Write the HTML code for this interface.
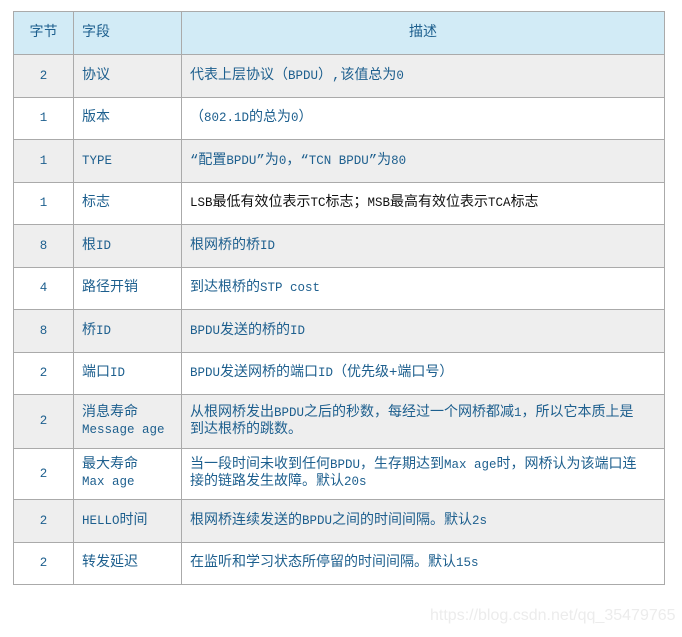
<!DOCTYPE html>
<html><head><meta charset="utf-8"><style>
body{margin:0;background:#fff;width:682px;height:637px;position:relative;overflow:hidden;font-family:"Liberation Mono","Noto Sans CJK SC",monospace;font-size:14px;color:#1d5f8e}
table{position:absolute;left:13px;top:11px;border-collapse:collapse;width:652px;table-layout:fixed}
td,th{border:1px solid #aaa;padding:0 14px 0 8px;font-weight:normal;line-height:17px}
th{background:#d2ebf6;height:42px;text-align:left}
tr.g td{background:#eee}
td.c,th.c{text-align:center;padding:0}
.m{font-size:12.5px}
.wm{position:absolute;left:430px;top:607px;font-family:"Liberation Sans",sans-serif;font-size:16px;color:#ececec}
</style></head><body>
<table>
<col style="width:60px"><col style="width:108px"><col>
<tr><th class="c">字节</th><th>字段</th><th class="c">描述</th></tr>
<tr class="g" style="height:43px"><td class="c m">2</td><td>协议</td><td>代表上层协议（<span class="m">BPDU</span>）,该值总为<span class="m">0</span></td></tr>
<tr style="height:42px"><td class="c m">1</td><td>版本</td><td>（<span class="m">802.1D</span>的总为<span class="m">0</span>）</td></tr>
<tr class="g" style="height:43px"><td class="c m">1</td><td class="m">TYPE</td><td>“配置<span class="m">BPDU</span>”为<span class="m">0</span>，“<span class="m">TCN BPDU</span>”为<span class="m">80</span></td></tr>
<tr style="height:42px"><td class="c m">1</td><td>标志</td><td style="color:#111"><span class="m">LSB</span>最低有效位表示<span class="m">TC</span>标志；<span class="m">MSB</span>最高有效位表示<span class="m">TCA</span>标志</td></tr>
<tr class="g" style="height:43px"><td class="c m">8</td><td>根<span class="m">ID</span></td><td>根网桥的桥<span class="m">ID</span></td></tr>
<tr style="height:42px"><td class="c m">4</td><td>路径开销</td><td>到达根桥的<span class="m">STP cost</span></td></tr>
<tr class="g" style="height:43px"><td class="c m">8</td><td>桥<span class="m">ID</span></td><td><span class="m">BPDU</span>发送的桥的<span class="m">ID</span></td></tr>
<tr style="height:42px"><td class="c m">2</td><td>端口<span class="m">ID</span></td><td><span class="m">BPDU</span>发送网桥的端口<span class="m">ID</span>（优先级+端口号）</td></tr>
<tr class="g" style="height:54px"><td class="c m">2</td><td>消息寿命<br><span class="m">Message age</span></td><td>从根网桥发出<span class="m">BPDU</span>之后的秒数，每经过一个网桥都减<span class="m">1</span>，所以它本质上是<br>到达根桥的跳数。</td></tr>
<tr style="height:51px"><td class="c m">2</td><td>最大寿命<br><span class="m">Max age</span></td><td>当一段时间未收到任何<span class="m">BPDU</span>，生存期达到<span class="m">Max age</span>时，网桥认为该端口连<br>接的链路发生故障。默认<span class="m">20s</span></td></tr>
<tr class="g" style="height:43px"><td class="c m">2</td><td><span class="m">HELLO</span>时间</td><td>根网桥连续发送的<span class="m">BPDU</span>之间的时间间隔。默认<span class="m">2s</span></td></tr>
<tr style="height:42px"><td class="c m">2</td><td>转发延迟</td><td>在监听和学习状态所停留的时间间隔。默认<span class="m">15s</span></td></tr>
</table>
<div class="wm">https://blog.csdn.net/qq_35479765</div>
</body></html>
